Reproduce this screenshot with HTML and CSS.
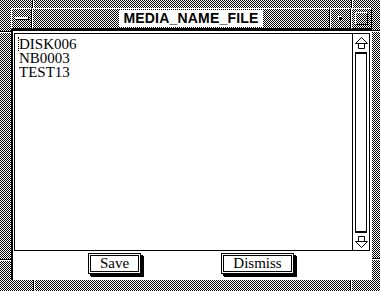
FILE: index.html
```html
<!DOCTYPE html>
<html>
<head>
<meta charset="utf-8">
<link rel="stylesheet" href="styles.css">
</head>
<body class="checker">
<div class="window">
  <div class="titlebar">
    <div class="tb-btn menu-btn checker"><span class="dash"></span></div>
    <div class="tb-title checker"><span class="title-text">MEDIA_NAME_FILE</span></div>
    <div class="tb-btn min-btn checker"><span class="dot"></span></div>
    <div class="tb-btn max-btn checker"><span class="square checker"></span></div>
  </div>
  <div class="client">
    <div class="listbox">
      <ul class="items">
        <li class="item focus">DISK006</li>
        <li class="item">NB0003</li>
        <li class="item">TEST13</li>
      </ul>
      <div class="scrollbar">
        <svg class="arrow" width="13" height="12" viewBox="0 0 13 12"><polygon points="0.5,6.5 6.5,0.5 12.5,6.5 9.5,6.5 9.5,11.5 3.5,11.5 3.5,6.5" fill="#fff" stroke="#000" stroke-width="1"/><line x1="3" y1="6.5" x2="10" y2="6.5" stroke="#000"/></svg>
        <div class="trough"><div class="thumb"></div></div>
        <svg class="arrow" width="13" height="12" viewBox="0 0 13 12"><polygon points="0.5,5.5 6.5,11.5 12.5,5.5 9.5,5.5 9.5,0.5 3.5,0.5 3.5,5.5" fill="#fff" stroke="#000" stroke-width="1"/><line x1="3" y1="5.5" x2="10" y2="5.5" stroke="#000"/></svg>
      </div>
    </div>
    <div class="buttons">
      <button class="btn btn-save">Save</button>
      <button class="btn btn-dismiss">Dismiss</button>
    </div>
  </div>
</div>
<span class="mark mv" style="left:32px;top:0;height:8px"></span>
<span class="mark mv" style="left:351px;top:0;height:8px"></span>
<span class="mark mv" style="left:33px;top:280px;height:11px"></span>
<span class="mark mv" style="left:350px;top:280px;height:11px"></span>
<span class="mark mh" style="left:0;top:31px;width:11px"></span>
<span class="mark mh" style="left:0;top:259px;width:11px"></span>
<span class="mark mh" style="left:372px;top:30px;width:8px"></span>
<span class="mark mh" style="left:372px;top:258px;width:8px"></span>
</body>
</html>
```

FILE: styles.css
```css
* { box-sizing: border-box; }
html, body { margin: 0; padding: 0; }
body {
  width: 380px;
  height: 291px;
  position: relative;
  overflow: hidden;
}
.checker {
  background-color: #fff;
  background-image: url("data:image/svg+xml,%3Csvg xmlns='http://www.w3.org/2000/svg' width='2' height='2' shape-rendering='crispEdges'%3E%3Crect width='1' height='1' fill='black'/%3E%3Crect x='1' y='1' width='1' height='1' fill='black'/%3E%3C/svg%3E");
  background-size: 2px 2px;
  background-attachment: fixed;
}
.window {
  padding: 8px 8px 11px 11px;
  display: flex;
  flex-direction: column;
  height: 291px;
}
.titlebar {
  display: flex;
  height: 21px;
}
.tb-btn, .tb-title {
  border-top: 1px solid #fff;
  border-left: 1px solid #fff;
  border-right: 1px solid #000;
  border-bottom: 1px solid #000;
  display: flex;
  align-items: center;
  justify-content: center;
}
.tb-btn { width: 21px; flex: none; }
.tb-title { flex: 1; padding-left: 20px; }
.title-text {
  background: #fff;
  font-family: "Liberation Sans", Arial, sans-serif;
  font-weight: bold;
  font-size: 14px;
  letter-spacing: 0.2px;
  line-height: 17px;
  padding: 0 4px;
  color: #000;
}
.dash {
  width: 14px;
  height: 3px;
  background: #fff;
  border-bottom: 1px solid #000;
  border-right: 1px solid #000;
}
.dot {
  width: 3px;
  height: 3px;
  background: #000;
  box-shadow: -1px -1px 0 #fff;
}
.square {
  width: 13px;
  height: 13px;
  border-top: 1px solid #fff;
  border-left: 1px solid #fff;
  border-right: 1px solid #000;
  border-bottom: 1px solid #000;
}
.client {
  flex: 1;
  background: #fff;
  border-top: 2px solid #000;
  border-left: 2px solid #000;
  display: flex;
  flex-direction: column;
  padding: 2px 2px 0 1px;
}
.listbox {
  height: 218px;
  border: 1px solid #000;
  display: flex;
}
.items {
  flex: 1;
  list-style: none;
  margin: 0;
  padding: 3px 0 0 3px;
  font-family: "Liberation Serif", "Times New Roman", serif;
  font-size: 15px;
  line-height: 14px;
  color: #000;
}
.item {
  border-left: 1px dotted transparent;
  padding-left: 0;
  height: 14px;
}
.item.focus { border-left-color: #000; }
.scrollbar {
  width: 17px;
  flex: none;
  border-left: 1px solid #000;
  display: flex;
  flex-direction: column;
  align-items: center;
  padding: 3px 0 2px;
}
.arrow { display: block; flex: none; }
.trough {
  flex: 1;
  width: 100%;
  display: flex;
  justify-content: center;
  padding: 3px 0;
}
.thumb {
  width: 12px;
  border: 1px solid #000;
  border-top-width: 2px;
  border-bottom-width: 2px;
  background: #fff;
}
.buttons {
  display: flex;
  padding: 2px 0 0 74px;
  gap: 80px;
}
.btn {
  height: 21px;
  border: 1px solid #000;
  background: #fff;
  box-shadow: inset 0 0 0 1px #fff, inset 0 0 0 2px #000, 2px 2px 0 #000, 3px 3px 0 #000;
  font-family: "Liberation Serif", "Times New Roman", serif;
  font-size: 15px;
  color: #000;
  padding: 0;
  margin: 0;
  border-radius: 0;
  line-height: 17px;
}
.btn-save { width: 53px; }
.btn-dismiss { width: 73px; }
.mark { position: absolute; display: block; }
.mv { width: 2px; border-left: 1px solid #000; background: #fff; }
.mh { height: 2px; border-top: 1px solid #000; background: #fff; }
```
